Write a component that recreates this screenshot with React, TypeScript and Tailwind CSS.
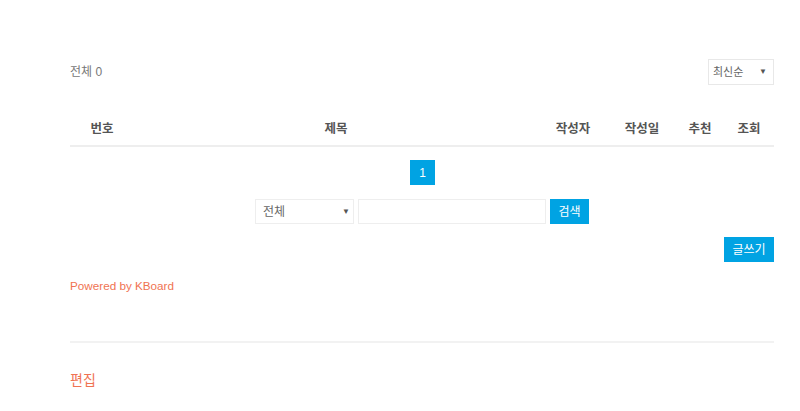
import React from "react";

const font = { fontFamily: '"Liberation Sans", "Noto Sans CJK KR", sans-serif' };

const cols = [
  { label: "번호", w: "w-[64px]" },
  { label: "제목", w: "flex-1" },
  { label: "작성자", w: "w-[70px]" },
  { label: "작성일", w: "w-[68px]" },
  { label: "추천", w: "w-[48px]" },
  { label: "조회", w: "w-[50px]" },
];

const Caret = () => <span className="text-[8px] text-[#555]">▼</span>;

export default function App() {
  return (
    <div className="min-h-[411px] bg-white pl-[70px] pt-[59px]" style={font}>
      <div className="w-[704px]">
        {/* top bar */}
        <div className="flex h-[26px] items-center justify-between">
          <span className="text-[12px] text-[#777]">전체 0</span>
          <div className="flex h-[26px] w-[66px] items-center justify-between border border-[#e8e8e8] pl-[4px] pr-[6px] text-[11px] text-[#666]">
            <span>최신순</span>
            <Caret />
          </div>
        </div>

        {/* table header */}
        <div className="mt-[28px] flex h-[34px] items-center border-b-2 border-[#eeeeee] text-[12.5px] font-bold text-[#555]">
          {cols.map(c => (
            <div key={c.label} className={`${c.w} text-center`}>
              {c.label}
            </div>
          ))}
        </div>

        {/* pagination */}
        <div className="mt-[13px] flex justify-center">
          <div className="ml-[1px] flex h-[25px] w-[25px] items-center justify-center bg-[#00a3e3] text-[12px] text-white">
            1
          </div>
        </div>

        {/* search */}
        <div className="mt-[14px] flex justify-center gap-[4px]">
          <div className="flex h-[25px] w-[99px] items-center justify-between border border-[#eeeeee] pl-[7px] pr-[3px] text-[12px] text-[#666]">
            <span>전체</span>
            <Caret />
          </div>
          <div className="h-[25px] w-[188px] border border-[#eeeeee]" />
          <div className="flex h-[25px] w-[39px] items-center justify-center bg-[#00a3e3] text-[12px] text-white">
            검색
          </div>
        </div>

        {/* write */}
        <div className="mt-[13px] flex justify-end">
          <div className="flex h-[25px] w-[50px] items-center justify-center bg-[#00a3e3] text-[12px] text-white">
            글쓰기
          </div>
        </div>

        <div className="mt-[15px] text-[11.7px] text-[#f07352]">Powered by KBoard</div>

        <div className="mt-[46px] h-[2px] bg-[#f2f2f2]" />

        <div className="mt-[27px] text-[14px] text-[#f07352]">편집</div>
      </div>
    </div>
  );
}
